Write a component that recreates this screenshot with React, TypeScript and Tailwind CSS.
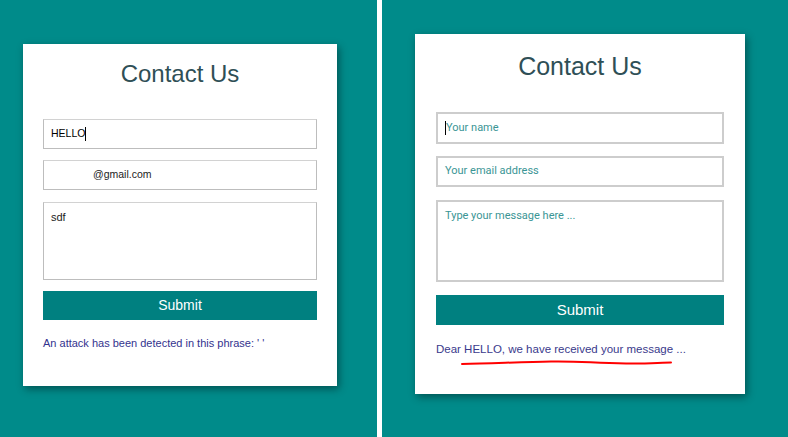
import React from "react";

export default function App() {
  return (
    <div className="w-[788px] h-[437px] flex bg-white overflow-hidden" style={{ fontFamily: "'Liberation Sans', Arial, sans-serif" }}>
      {/* Left panel */}
      <div className="w-[377px] h-full bg-[#008b8a] pl-[23px] pt-[44px]">
        <div className="w-[314px] h-[342px] bg-white shadow-[2px_3px_8px_rgba(0,0,0,0.4)] px-[20px] pt-[16px] flex flex-col">
          <h1 className="text-[24px] leading-[28px] text-center text-[#2f4f56]">Contact Us</h1>
          <div className="mt-[31px] h-[30px] border border-[#bdbdbd] border-t-[#d2d2d2] flex items-center pl-[7px] text-[10.5px] text-black">
            <span>HELLO</span>
            <span className="w-px h-[14px] bg-black" />
          </div>
          <div className="mt-[11px] h-[30px] border border-[#bdbdbd] border-t-[#d2d2d2] flex items-center pl-[49px] text-[10.5px] text-[#222]">
            <span>@gmail.com</span>
          </div>
          <div className="mt-[12px] h-[78px] border border-[#bdbdbd] border-t-[#d2d2d2] pl-[7px] pt-[7px] text-[11px] leading-[14px] text-[#222]">
            sdf
          </div>
          <div className="mt-[11px] h-[29px] bg-[#008080] flex items-center justify-center text-white text-[14px]">
            Submit
          </div>
          <p className="mt-[16px] text-[11px] leading-[14px] text-[#33338e]">
            An attack has been detected in this phrase: ' '
          </p>
        </div>
      </div>

      {/* Divider */}
      <div className="w-[5px] h-full bg-white" />

      {/* Right panel */}
      <div className="flex-1 h-full bg-[#008b8a] pl-[33px] pt-[34px]">
        <div className="w-[330px] h-[360px] bg-white shadow-[2px_3px_8px_rgba(0,0,0,0.4)] px-[21px] pt-[17px] flex flex-col">
          <h1 className="text-[25px] leading-[30px] text-center text-[#2f4f56]">Contact Us</h1>
          <div className="mt-[31px] h-[32px] border-2 border-[#cdcdcd] flex items-center pl-[7px] text-[11px] text-[#3a9595]" style={{ fontFamily: "Roboto, 'Liberation Sans', sans-serif" }}>
            <span className="w-px h-[14px] bg-black" />
            <span>Your name</span>
          </div>
          <div className="mt-[12px] h-[31px] border-2 border-[#cdcdcd] flex items-center pl-[7px] text-[11px] text-[#3a9595]" style={{ fontFamily: "Roboto, 'Liberation Sans', sans-serif" }}>
            <span>Your email address</span>
          </div>
          <div className="mt-[13px] h-[82px] border-2 border-[#cdcdcd] pl-[7px] pt-[7px] text-[11px] leading-[14px] text-[#3a9595]" style={{ fontFamily: "Roboto, 'Liberation Sans', sans-serif" }}>
            Type your message here ...
          </div>
          <div className="mt-[13px] h-[30px] bg-[#008080] flex items-center justify-center text-white text-[15px]">
            Submit
          </div>
          <div className="relative mt-[16px]">
            <p className="text-[11.5px] leading-[16px] text-[#3a3a8c]">
              Dear HELLO, we have received your message ...
            </p>
            <svg className="absolute left-[25px] top-[18px]" width="212" height="8" viewBox="0 0 212 8">
              <path d="M1 5 C 30 4.5, 60 3, 90 2.5 S 130 4, 165 4.5 S 200 3.5, 210 3.5" fill="none" stroke="#ff0000" strokeWidth="2" strokeLinecap="round" />
            </svg>
          </div>
        </div>
      </div>
    </div>
  );
}
